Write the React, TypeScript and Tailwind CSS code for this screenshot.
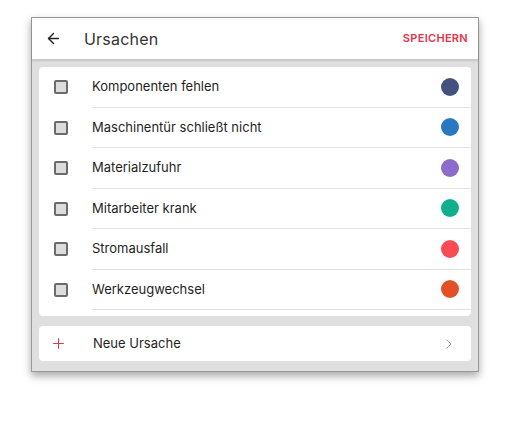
import { ArrowLeft, Plus, ChevronRight } from 'lucide-react';

const causes = [
  { name: 'Komponenten fehlen', color: '#45527f' },
  { name: 'Maschinentür schließt nicht', color: '#2a78c2' },
  { name: 'Materialzufuhr', color: '#8a6ccb' },
  { name: 'Mitarbeiter krank', color: '#10b08f' },
  { name: 'Stromausfall', color: '#fa4b52' },
  { name: 'Werkzeugwechsel', color: '#e35027' },
];

export default function App() {
  return (
    <div className="w-[510px] h-[445px] bg-white pt-[17px] pl-[31px]" style={{ fontFamily: 'Inter, "Noto Sans", sans-serif' }}>
      <div className="w-[448px] border border-[#9a9a9a] bg-[#dfdfdf] shadow-[0_4px_8px_rgba(0,0,0,0.35)]">
        <div className="h-[42px] bg-white border-b border-[#c8c8c8] flex items-center pl-[13px] pr-[10px] shadow-[0_1px_2px_rgba(0,0,0,0.12)]">
          <ArrowLeft className="w-[17px] h-[17px] text-[#222]" strokeWidth={2} />
          <span className="ml-[22px] text-[16px] text-[#333] tracking-[0.2px]">Ursachen</span>
          <span className="ml-auto text-[11px] font-semibold text-[#e5344b] tracking-[0.3px]">SPEICHERN</span>
        </div>
        <div className="p-[7px] pt-[7px] pb-[10px]">
          <div className="bg-white rounded-[4px] pb-[6px]">
            {causes.map((c) => (
              <div key={c.name} className="flex items-center h-[40.5px]">
                <div className="w-[53px] pl-[15px] flex items-center">
                  <div className="w-[14px] h-[14px] border-2 border-[#6b6b6b] bg-[#dcdcdc] rounded-[2px]" />
                </div>
                <div className="flex-1 h-full flex items-center border-b border-[#e2e2e2] pr-[12px]">
                  <span className="text-[13px] text-[#1f1f1f]">{c.name}</span>
                  <span className="ml-auto w-[18px] h-[18px] rounded-full" style={{ backgroundColor: c.color }} />
                </div>
              </div>
            ))}
          </div>
          <div className="mt-[10px] bg-white rounded-[4px] h-[35px] flex items-center pl-[11px] pr-[14px]">
            <Plus className="w-[17px] h-[17px] text-[#e5344b]" strokeWidth={1.4} />
            <span className="ml-[26px] text-[13px] text-[#1f1f1f]">Neue Ursache</span>
            <ChevronRight className="ml-auto w-[16px] h-[16px] text-[#a8a8a8]" strokeWidth={1.5} />
          </div>
        </div>
      </div>
    </div>
  );
}
